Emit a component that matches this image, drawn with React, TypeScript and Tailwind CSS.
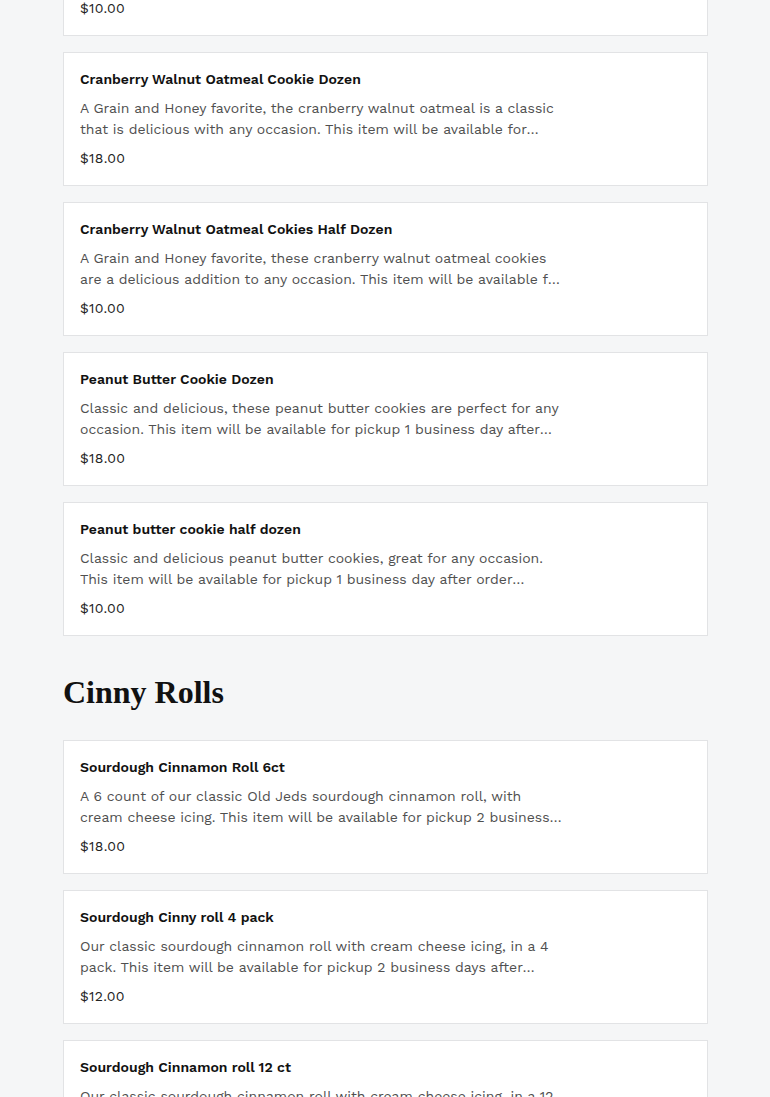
import React from "react";

type Item = { name: string; desc: string; price: string };

const cookies: Item[] = [
  {
    name: "Oatmeal Raisin Cookie Half Dozen",
    desc: "Classic oatmeal raisin cookies, soft and chewy. This item will be available for pickup 1 business day after order.",
    price: "$10.00",
  },
  {
    name: "Cranberry Walnut Oatmeal Cookie Dozen",
    desc: "A Grain and Honey favorite, the cranberry walnut oatmeal is a classic that is delicious with any occasion. This item will be available for pickup 1 business day after order.",
    price: "$18.00",
  },
  {
    name: "Cranberry Walnut Oatmeal Cokies Half Dozen",
    desc: "A Grain and Honey favorite, these cranberry walnut oatmeal cookies are a delicious addition to any occasion. This item will be available for pickup 1 business day after order.",
    price: "$10.00",
  },
  {
    name: "Peanut Butter Cookie Dozen",
    desc: "Classic and delicious, these peanut butter cookies are perfect for any occasion. This item will be available for pickup 1 business day after order.",
    price: "$18.00",
  },
  {
    name: "Peanut butter cookie half dozen",
    desc: "Classic and delicious peanut butter cookies, great for any occasion. This item will be available for pickup 1 business day after order confirmation.",
    price: "$10.00",
  },
];

const rolls: Item[] = [
  {
    name: "Sourdough Cinnamon Roll 6ct",
    desc: "A 6 count of our classic Old Jeds sourdough cinnamon roll, with cream cheese icing. This item will be available for pickup 2 business days after order.",
    price: "$18.00",
  },
  {
    name: "Sourdough Cinny roll 4 pack",
    desc: "Our classic sourdough cinnamon roll with cream cheese icing, in a 4 pack. This item will be available for pickup 2 business days after order.",
    price: "$12.00",
  },
  {
    name: "Sourdough Cinnamon roll 12 ct",
    desc: "Our classic sourdough cinnamon roll with cream cheese icing, in a 12 pack. This item will be available for pickup 2 business days after order.",
    price: "$30.00",
  },
];

const sans = "font-['Work_Sans','Inter','Noto_Sans',sans-serif]";

const ItemCard: React.FC<{ item: Item }> = ({ item }) => (
  <div className="bg-white border border-[#e2e3e5] px-4 pt-4 pb-[17px]">
    <div className="text-[14px] leading-5 font-semibold text-[#111]">{item.name}</div>
    <p className="mt-[9px] max-w-[485px] text-[14px] leading-[21px] text-[#4f4f4f] line-clamp-2">
      {item.desc}
    </p>
    <div className="mt-2 text-[14px] leading-5 text-[#222] tracking-[0.02em]">{item.price}</div>
  </div>
);

export default function App() {
  return (
    <div className={`min-h-screen bg-[#f5f6f7] ${sans} overflow-hidden`}>
      <div className="mx-[63px] w-[645px] -mt-[98px] pb-10">
        <div className="flex flex-col gap-4">
          {cookies.map((c) => (
            <ItemCard key={c.name} item={c} />
          ))}
        </div>
        <h2 className="mt-[36px] mb-[28px] text-[32px] leading-10 font-bold text-[#111] font-['Liberation_Serif','DejaVu_Serif',serif]">
          Cinny Rolls
        </h2>
        <div className="flex flex-col gap-4">
          {rolls.map((c) => (
            <ItemCard key={c.name} item={c} />
          ))}
        </div>
      </div>
    </div>
  );
}
